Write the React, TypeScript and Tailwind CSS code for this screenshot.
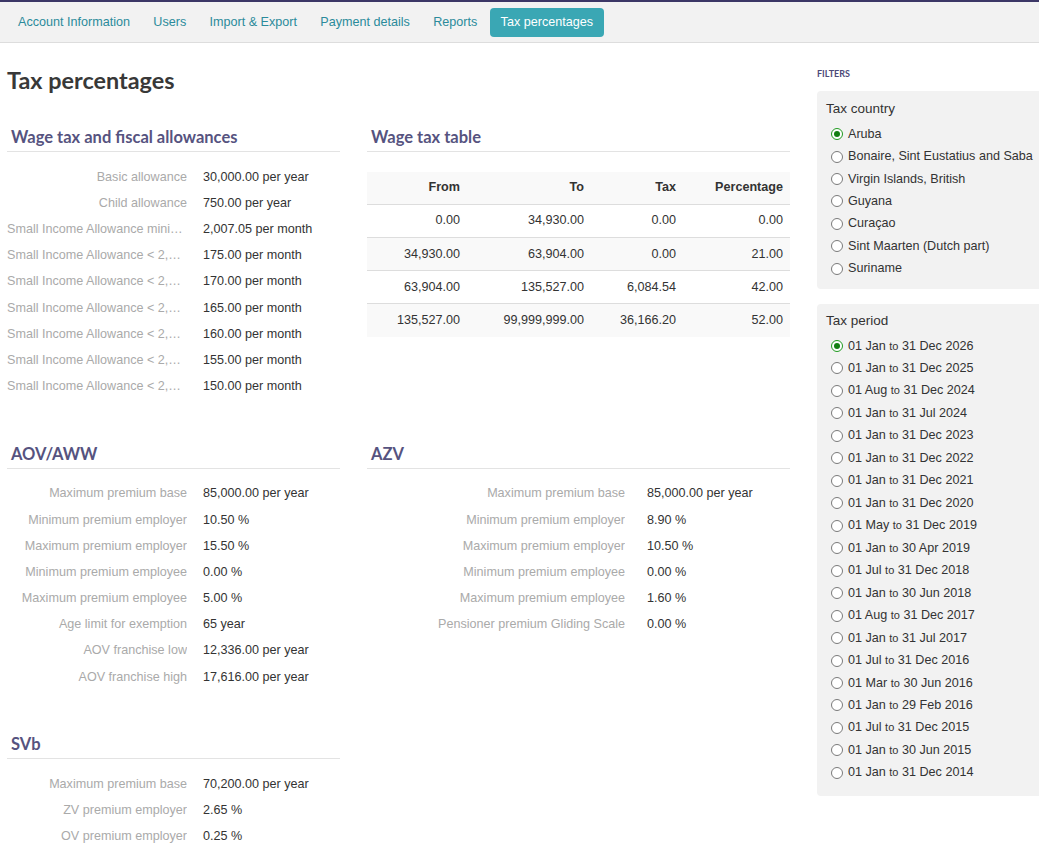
const tabs = ["Account Information", "Users", "Import & Export", "Payment details", "Reports", "Tax percentages"];

const wageRows: [string, string][] = [
  ["Basic allowance", "30,000.00 per year"],
  ["Child allowance", "750.00 per year"],
  ["Small Income Allowance minimum income", "2,007.05 per month"],
  ["Small Income Allowance < 2,100.00", "175.00 per month"],
  ["Small Income Allowance < 2,200.00", "170.00 per month"],
  ["Small Income Allowance < 2,300.00", "165.00 per month"],
  ["Small Income Allowance < 2,400.00", "160.00 per month"],
  ["Small Income Allowance < 2,500.00", "155.00 per month"],
  ["Small Income Allowance < 2,600.00", "150.00 per month"],
];

const aovRows: [string, string][] = [
  ["Maximum premium base", "85,000.00 per year"],
  ["Minimum premium employer", "10.50 %"],
  ["Maximum premium employer", "15.50 %"],
  ["Minimum premium employee", "0.00 %"],
  ["Maximum premium employee", "5.00 %"],
  ["Age limit for exemption", "65 year"],
  ["AOV franchise low", "12,336.00 per year"],
  ["AOV franchise high", "17,616.00 per year"],
];

const azvRows: [string, string][] = [
  ["Maximum premium base", "85,000.00 per year"],
  ["Minimum premium employer", "8.90 %"],
  ["Maximum premium employer", "10.50 %"],
  ["Minimum premium employee", "0.00 %"],
  ["Maximum premium employee", "1.60 %"],
  ["Pensioner premium Gliding Scale", "0.00 %"],
];

const svbRows: [string, string][] = [
  ["Maximum premium base", "70,200.00 per year"],
  ["ZV premium employer", "2.65 %"],
  ["OV premium employer", "0.25 %"],
];

const taxTable = [
  ["0.00", "34,930.00", "0.00", "0.00"],
  ["34,930.00", "63,904.00", "0.00", "21.00"],
  ["63,904.00", "135,527.00", "6,084.54", "42.00"],
  ["135,527.00", "99,999,999.00", "36,166.20", "52.00"],
];

const countries = [
  "Aruba",
  "Bonaire, Sint Eustatius and Saba",
  "Virgin Islands, British",
  "Guyana",
  "Curaçao",
  "Sint Maarten (Dutch part)",
  "Suriname",
];

const periods: [string, string][] = [
  ["01 Jan", "31 Dec 2026"],
  ["01 Jan", "31 Dec 2025"],
  ["01 Aug", "31 Dec 2024"],
  ["01 Jan", "31 Jul 2024"],
  ["01 Jan", "31 Dec 2023"],
  ["01 Jan", "31 Dec 2022"],
  ["01 Jan", "31 Dec 2021"],
  ["01 Jan", "31 Dec 2020"],
  ["01 May", "31 Dec 2019"],
  ["01 Jan", "30 Apr 2019"],
  ["01 Jul", "31 Dec 2018"],
  ["01 Jan", "30 Jun 2018"],
  ["01 Aug", "31 Dec 2017"],
  ["01 Jan", "31 Jul 2017"],
  ["01 Jul", "31 Dec 2016"],
  ["01 Mar", "30 Jun 2016"],
  ["01 Jan", "29 Feb 2016"],
  ["01 Jul", "31 Dec 2015"],
  ["01 Jan", "30 Jun 2015"],
  ["01 Jan", "31 Dec 2014"],
];

const SectionTitle = ({ children }: { children: string }) => (
  <h2
    className="border-b border-[#e3e3e3] pb-[4px] pl-[4px] text-[16.5px] leading-[20px] font-bold text-[#56537f]"
    style={{ fontFamily: "Lato, 'Open Sans', sans-serif" }}
  >
    {children}
  </h2>
);

const InfoRows = ({ rows, labelWidth, gap }: { rows: [string, string][]; labelWidth: string; gap: string }) => (
  <div className="mt-[12px]">
    {rows.map(([label, value], i) => (
      <div key={i} className={`flex h-[26.2px] items-center ${gap}`}>
        <div className={`${labelWidth} truncate text-right text-[#aaaaaa]`}>{label}</div>
        <div className="text-[#333333]">{value}</div>
      </div>
    ))}
  </div>
);

const Radio = ({ checked }: { checked?: boolean }) =>
  checked ? (
    <span className="flex h-[12px] w-[12px] shrink-0 items-center justify-center rounded-full border border-[#1f9a1f] bg-white">
      <span className="h-[6px] w-[6px] rounded-full bg-[#137f13]" />
    </span>
  ) : (
    <span className="h-[12px] w-[12px] shrink-0 rounded-full border border-[#7a7a7a] bg-white" />
  );

export default function App() {
  return (
    <div
      className="min-h-[847px] bg-white text-[12.6px] text-[#333333]"
      style={{ fontFamily: "'Liberation Sans', Arial, sans-serif" }}
    >
      <nav className="flex h-[43px] items-center gap-[1.3px] border-t-2 border-b border-t-[#3c3766] border-b-[#dddddd] bg-[#f2f2f2] pl-[7px] pt-[1px] text-[12.6px]">
        {tabs.map((t) => (
          <span
            key={t}
            className={
              t === "Tax percentages"
                ? "rounded-[4px] bg-[#3aa7b4] px-[11px] py-[5px] text-white"
                : "px-[11px] py-[5px] text-[#2b8b9b]"
            }
          >
            {t}
          </span>
        ))}
      </nav>

      <div className="flex">
        <main className="w-[790px] shrink-0 pl-[7px]">
          <h1
            className="mt-[22px] text-[23.4px] leading-[30px] font-bold text-[#383838]"
            style={{ fontFamily: "Lato, 'Open Sans', sans-serif" }}
          >
            Tax percentages
          </h1>

          <div className="mt-[32px] grid grid-cols-[333px_423px] gap-x-[27px] gap-y-[44px]">
            <section>
              <SectionTitle>Wage tax and fiscal allowances</SectionTitle>
              <InfoRows rows={wageRows} labelWidth="w-[180px]" gap="gap-[16px]" />
            </section>

            <section>
              <SectionTitle>Wage tax table</SectionTitle>
              <table className="mt-[20px] w-full table-fixed border-collapse">
                <colgroup>
                  <col className="w-[100px]" />
                  <col className="w-[124px]" />
                  <col className="w-[92px]" />
                  <col className="w-[107px]" />
                </colgroup>
                <thead>
                  <tr className="h-[32px] bg-[#f9f9f9]">
                    {["From", "To", "Tax", "Percentage"].map((h) => (
                      <th key={h} className="pr-[7px] text-right font-bold text-[#333333]">
                        {h}
                      </th>
                    ))}
                  </tr>
                </thead>
                <tbody>
                  {taxTable.map((r, i) => (
                    <tr key={i} className={`h-[33.3px] border-t border-[#dddddd] ${i % 2 === 1 ? "bg-[#f9f9f9]" : "bg-white"}`}>
                      {r.map((c, j) => (
                        <td key={j} className="pr-[7px] text-right">
                          {c}
                        </td>
                      ))}
                    </tr>
                  ))}
                </tbody>
              </table>
            </section>

            <section>
              <SectionTitle>AOV/AWW</SectionTitle>
              <InfoRows rows={aovRows} labelWidth="w-[180px]" gap="gap-[16px]" />
            </section>

            <section>
              <SectionTitle>AZV</SectionTitle>
              <InfoRows rows={azvRows} labelWidth="w-[258px]" gap="gap-[22px]" />
            </section>

            <section>
              <SectionTitle>SVb</SectionTitle>
              <InfoRows rows={svbRows} labelWidth="w-[180px]" gap="gap-[16px]" />
            </section>
          </div>
        </main>

        <aside className="ml-[27px] min-w-0 flex-1">
          <div
            className="mt-[25px] text-[9px] leading-[12px] font-bold text-[#4d4a78]"
            style={{ fontFamily: "Lato, 'Open Sans', sans-serif" }}
          >
            FILTERS
          </div>

          <div className="mt-[11px] rounded-l-[4px] bg-[#f2f2f2] pt-[9px] pb-[9px] pl-[9px]">
            <div className="text-[13.5px] leading-[18px] text-[#333333]">Tax country</div>
            <div className="mt-[5px]">
              {countries.map((c, i) => (
                <div key={c} className="flex h-[22.4px] items-center gap-[5px] whitespace-nowrap pl-[5px]">
                  <Radio checked={i === 0} />
                  <span>{c}</span>
                </div>
              ))}
            </div>
          </div>

          <div className="mt-[15px] rounded-l-[4px] bg-[#f2f2f2] pt-[8px] pb-[12px] pl-[9px]">
            <div className="text-[13.5px] leading-[18px] text-[#333333]">Tax period</div>
            <div className="mt-[5px]">
              {periods.map(([from, to], i) => (
                <div key={i} className="flex h-[22.47px] items-center gap-[5px] whitespace-nowrap pl-[5px]">
                  <Radio checked={i === 0} />
                  <span>
                    {from} <span className="text-[11px]">to</span> {to}
                  </span>
                </div>
              ))}
            </div>
          </div>
        </aside>
      </div>
    </div>
  );
}
